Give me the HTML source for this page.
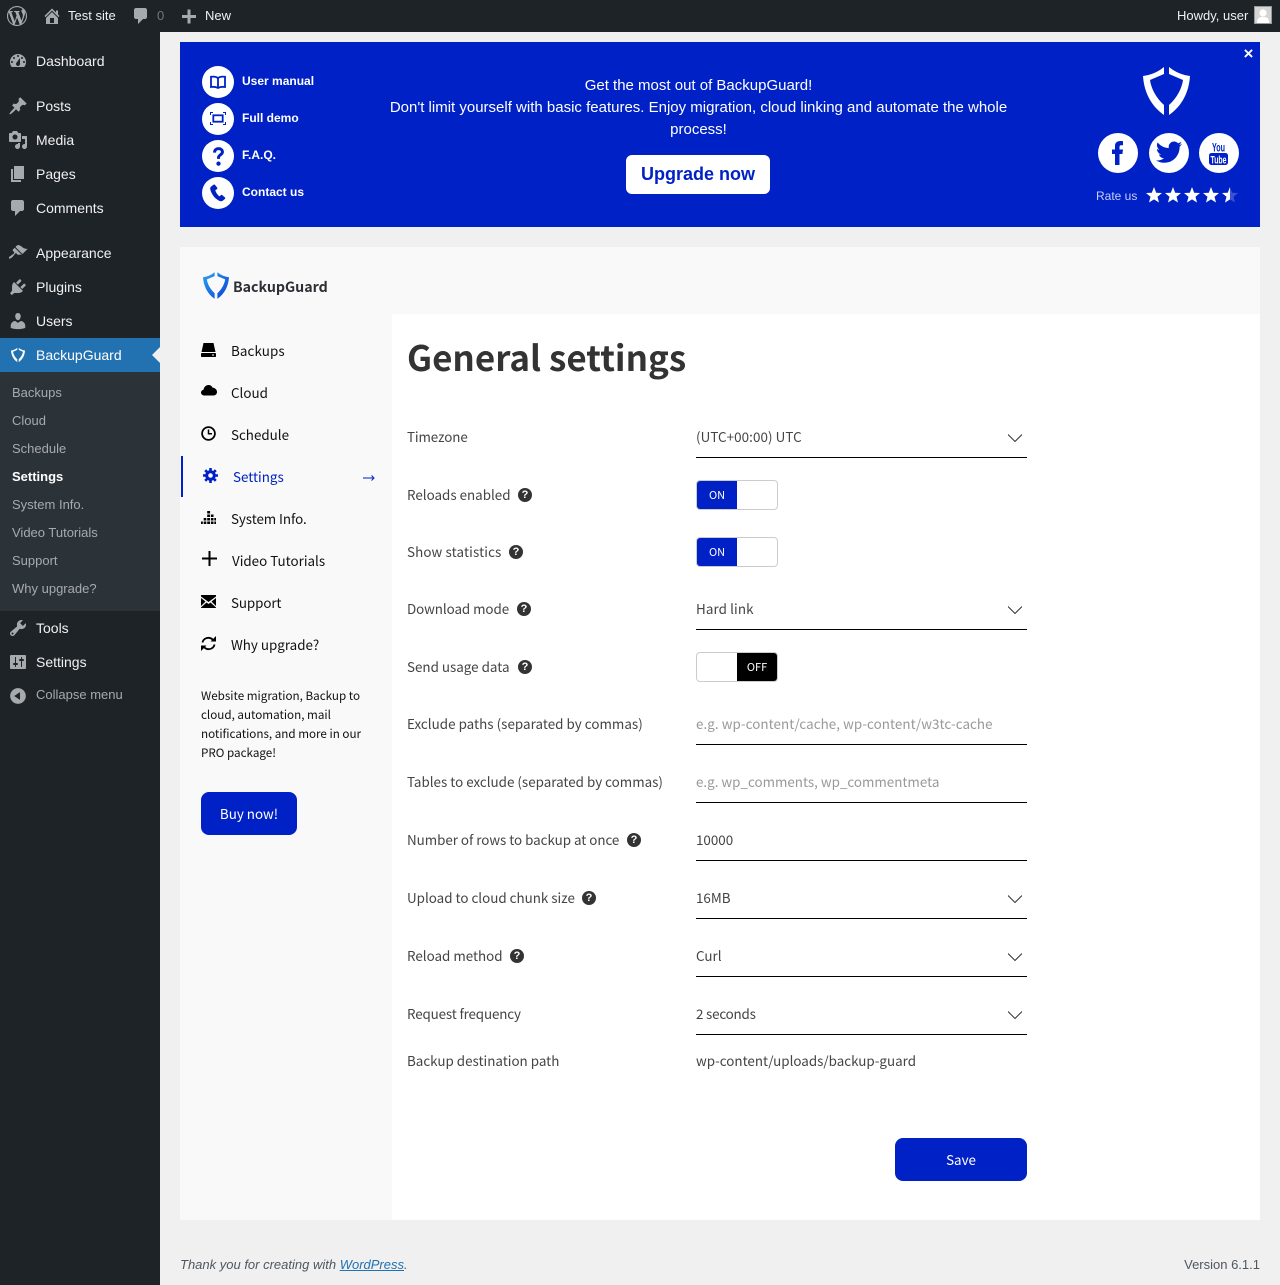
<!DOCTYPE html>
<html lang="en"><head><meta charset="utf-8"><title>General settings</title>
<style>
*{box-sizing:border-box}
html,body{margin:0;padding:0}
body{width:1280px;height:1285px;position:relative;overflow:hidden;background:#f0f0f1;font-family:"Liberation Sans",sans-serif}
.a{position:absolute;white-space:nowrap}
svg{position:absolute;display:block}
.ab{font-size:13px;line-height:20px;color:#f0f0f1}
.m{font-size:14px;line-height:20px;color:#f0f0f1;left:36px}
.s{font-size:13px;line-height:18px;color:#a7aaad;left:12px}
.ic{fill:#a7aaad}
.n{font-family:"Noto Sans CJK JP",sans-serif;font-size:13.4px;line-height:20px;color:#111;margin-top:-1px}
.l{font-family:"Noto Sans CJK JP",sans-serif;font-size:13.4px;line-height:20px;color:#444;left:407px;margin-top:-1px}
.v{font-family:"Noto Sans CJK JP",sans-serif;font-size:13.4px;line-height:20px;color:#444;left:696px;margin-top:-1px}
.p{color:#999}
.u{position:absolute;left:696px;width:331px;height:1px;background:#000}
.q{position:absolute;width:14px;height:14px;border-radius:50%;background:#333;color:#fff;font:bold 11px/14px "Liberation Sans",sans-serif;text-align:center}
.t{position:absolute;left:696px;width:82px;height:30px;border:1px solid #ccc;border-radius:4px;background:#fff;overflow:hidden}
.t b{position:absolute;top:0;height:28px;width:40px;font:400 11px/28px "Noto Sans CJK JP",sans-serif;color:#fff;text-align:center}
.ch{position:absolute;left:1008px;width:14px;height:8px}
.bl{font-size:12px;font-weight:bold;line-height:16px;color:#fff;left:242px}
.c{position:absolute;background:#fff;border-radius:50%}
</style></head><body>

<!-- admin bar -->
<div class="a" style="left:0;top:0;width:1280px;height:32px;background:#1d2327"></div>
<svg style="left:7px;top:6px" width="20" height="20" viewBox="0 0 20 20"><path class="ic" fill-rule="evenodd" d="M20 10c0-5.51-4.49-10-10-10C4.48 0 0 4.49 0 10c0 5.52 4.48 10 10 10 5.51 0 10-4.48 10-10zM7.78 15.37L4.37 6.22c.55-.02 1.17-.08 1.17-.08.5-.06.44-1.13-.06-1.11 0 0-1.45.11-2.37.11-.18 0-.37 0-.58-.01C4.12 2.69 6.87 1.11 10 1.11c2.33 0 4.45.87 6.05 2.34-.68-.11-1.65.39-1.65 1.58 0 .74.45 1.36.9 2.1.35.61.55 1.36.55 2.46 0 1.49-1.4 5-1.4 5l-3.03-8.37c.54-.02.82-.17.82-.17.5-.05.44-1.25-.06-1.22 0 0-1.44.12-2.38.12-.87 0-2.33-.12-2.33-.12-.5-.03-.56 1.2-.06 1.22l.92.08 1.26 3.41zM17.41 10c.24-.64.74-1.87.43-4.25.7 1.29 1.05 2.71 1.05 4.25 0 3.29-1.73 6.24-4.4 7.78.97-2.59 1.94-5.2 2.92-7.78zM6.1 18.09C3.12 16.65 1.11 13.53 1.11 10c0-1.3.23-2.48.72-3.59C3.25 10.3 4.67 14.2 6.1 18.09zm4.03-6.63l2.58 6.98c-.86.29-1.76.45-2.71.45-.79 0-1.57-.11-2.29-.33.81-2.38 1.62-4.74 2.42-7.1z"/></svg>
<svg style="left:42px;top:6px" width="20" height="20" viewBox="0 0 20 20"><path class="ic" d="M16 8.5l1.53 1.53-1.06 1.06L10 4.62l-6.47 6.47-1.06-1.06L10 2.5l4 4v-2h2v4zm-6-2.46l6 5.99V18H4v-5.97zM12 17v-5H8v5h4z"/></svg>
<div class="a ab" style="left:68px;top:6px">Test site</div>
<svg style="left:131px;top:6px" width="20" height="20" viewBox="0 0 20 20"><path class="ic" d="M5 2h9c1.1 0 2 .9 2 2v7c0 1.1-.9 2-2 2h-2l-5 5v-5H5c-1.1 0-2-.9-2-2V4c0-1.1.9-2 2-2z"/></svg>
<div class="a ab" style="left:157px;top:6px;color:#72777c">0</div>
<svg style="left:179px;top:6px" width="20" height="20" viewBox="0 0 20 20"><path class="ic" d="M17 9v3h-5.500v5.500h-3V12H3V9h5.500V3.500h3V9z"/></svg>
<div class="a ab" style="left:205px;top:6px">New</div>
<div class="a ab" style="left:1177px;top:6px">Howdy, user</div>
<div class="a" style="left:1254px;top:6px;width:18px;height:18px;background:#d5d5d5;border:1px solid #999;overflow:hidden">
<svg style="left:0;top:0" width="16" height="16" viewBox="0 0 16 16"><circle cx="8" cy="6" r="3.600" fill="#fff"/><path d="M2 16c0-5 2-6 6-6s6 1 6 6z" fill="#fff"/></svg></div>

<!-- sidebar -->
<div class="a" style="left:0;top:32px;width:160px;height:1253px;background:#1d2327"></div>
<svg style="left:8px;top:51px" width="20" height="20" viewBox="0 0 20 20"><path class="ic" fill-rule="evenodd" d="M3.760 16h12.480c1.100-1.370 1.760-3.110 1.760-5 0-4.420-3.580-8-8-8s-8 3.580-8 8c0 1.890.660 3.630 1.760 5zM10 4c.55 0 1 .45 1 1s-.45 1-1 1-1-.45-1-1 .45-1 1-1zM6 6c.55 0 1 .45 1 1s-.45 1-1 1-1-.45-1-1 .45-1 1-1zm8 0c.55 0 1 .45 1 1s-.45 1-1 1-1-.45-1-1 .45-1 1-1zm-5.370 5.550L12 7v6c0 1.100-.9 2-2 2s-2-.9-2-2c0-.57.24-1.080.63-1.450zM4 10c.55 0 1 .45 1 1s-.45 1-1 1-1-.45-1-1 .45-1 1-1zm12 0c.55 0 1 .45 1 1s-.45 1-1 1-1-.45-1-1 .45-1 1-1z"/></svg>
<div class="a m" style="top:51px">Dashboard</div>
<svg style="left:8px;top:96px" width="20" height="20" viewBox="0 0 20 20"><path class="ic" d="M10.440 3.020l1.820-1.820 6.360 6.350-1.830 1.820c-1.050-.68-2.480-.57-3.410.36l-.75.75c-.92.93-1.040 2.350-.35 3.410l-1.830 1.820-2.410-2.410-2.800 2.790c-.42.42-3.380 2.710-3.800 2.290s1.860-3.390 2.280-3.810l2.790-2.790L4.100 9.360l1.830-1.820c1.050.69 2.480.57 3.400-.36l.75-.75c.93-.92 1.050-2.350.36-3.410z"/></svg>
<div class="a m" style="top:96px">Posts</div>
<svg style="left:8px;top:130px" width="20" height="20" viewBox="0 0 20 20"><path class="ic" fill-rule="evenodd" d="M13 11V4c0-.55-.45-1-1-1h-1.670L9 1H5L3.670 3H2c-.55 0-1 .45-1 1v7c0 .55.45 1 1 1h10c.55 0 1-.45 1-1zM7 4.500c1.380 0 2.500 1.120 2.500 2.500S8.380 9.500 7 9.500 4.500 8.380 4.500 7 5.620 4.500 7 4.500zM14 6h5v10.500c0 1.380-1.120 2.500-2.500 2.500S14 17.880 14 16.500s1.120-2.500 2.500-2.500c.17 0 .34.02.5.05V9h-3V6zm-4 8.050V13h2v3.500c0 1.380-1.120 2.500-2.500 2.500S7 17.880 7 16.500 8.120 14 9.500 14c.17 0 .34.02.5.05z"/></svg>
<div class="a m" style="top:130px">Media</div>
<svg style="left:8px;top:164px" width="20" height="20" viewBox="0 0 20 20"><path class="ic" d="M6 15V2h10v13H6zm-1 1h8v2H3V5h2v11z"/></svg>
<div class="a m" style="top:164px">Pages</div>
<svg style="left:8px;top:198px" width="20" height="20" viewBox="0 0 20 20"><path class="ic" d="M5 2h9c1.100 0 2 .9 2 2v7c0 1.100-.9 2-2 2h-2l-5 5v-5H5c-1.100 0-2-.9-2-2V4c0-1.100.9-2 2-2z"/></svg>
<div class="a m" style="top:198px">Comments</div>
<svg style="left:8px;top:243px" width="20" height="20" viewBox="0 0 20 20"><path class="ic" d="M14.480 11.060L7.410 3.990l1.500-1.500c.5-.56 2.300-.47 3.510.32 1.210.8 1.430 1.280 2.910 2.100 1.180.64 2.450 1.260 4.450.85zm-.71.71L6.700 4.700 4.930 6.470c-.39.39-.39 1.020 0 1.410l1.060 1.060c.39.39.39 1.030 0 1.420-.6.6-1.430 1.110-2.210 1.690-.35.26-.7.53-1.010.84C1.430 13.230.4 14.800 1.070 15.470c.67.67 2.240-.35 3.580-1.690.31-.31.58-.66.84-1.010.58-.78 1.090-1.610 1.690-2.210.39-.39 1.020-.39 1.410 0l1.060 1.060c.39.39 1.020.39 1.410 0z"/></svg>
<div class="a m" style="top:243px">Appearance</div>
<svg style="left:8px;top:277px" width="20" height="20" viewBox="0 0 20 20"><path class="ic" d="M13.110 4.360L9.870 7.600 8 5.730l3.240-3.240c.35-.34 1.050-.2 1.560.32.52.51.66 1.210.31 1.550zm-8 1.770l.91-1.120 9.010 9.010-1.190.84c-.71.71-2.630 1.160-3.820 1.160H6.140L4.900 17.260c-.59.59-1.540.59-2.120 0-.59-.58-.59-1.530 0-2.120l1.240-1.240v-3.880c0-1.130.4-3.190 1.090-3.890zm7.260 3.970l3.240-3.240c.34-.35 1.040-.21 1.550.31.52.51.66 1.210.31 1.550l-3.240 3.250z"/></svg>
<div class="a m" style="top:277px">Plugins</div>
<svg style="left:8px;top:311px" width="20" height="20" viewBox="0 0 20 20"><path class="ic" d="M10 9.250c-2.270 0-2.730-3.440-2.730-3.440C7 4.020 7.820 2 9.970 2c2.160 0 2.980 2.020 2.710 3.810 0 0-.41 3.440-2.680 3.440zm0 2.570L12.720 10c2.390 0 4.520 2.330 4.520 4.530v2.490s-3.650 1.130-7.240 1.130c-3.650 0-7.240-1.130-7.240-1.130v-2.490c0-2.250 1.940-4.480 4.470-4.480z"/></svg>
<div class="a m" style="top:311px">Users</div>
<div class="a" style="left:0;top:338px;width:160px;height:34px;background:#2271b1"></div>
<svg style="left:11px;top:347px" width="14" height="16" viewBox="0 0 47 48"><path fill="#fff" d="M21 0V7L7 13C8 21 13 31 21 38V48C8 39 1 25 0 9C8 8 15 5 21 0ZM26 0V7L40 13C39 21 34 31 26 38V48C39 39 46 25 47 9C39 8 32 5 26 0Z"/></svg>
<div class="a m" style="top:345px;color:#fff">BackupGuard</div>
<div class="a" style="left:152px;top:347px;width:0;height:0;border:8px solid transparent;border-left:0;border-right-color:#f0f0f1"></div>
<div class="a" style="left:0;top:372px;width:160px;height:239px;background:#2c3338"></div>
<div class="a s" style="top:384px">Backups</div>
<div class="a s" style="top:412px">Cloud</div>
<div class="a s" style="top:440px">Schedule</div>
<div class="a s" style="top:468px;color:#fff;font-weight:bold">Settings</div>
<div class="a s" style="top:496px">System Info.</div>
<div class="a s" style="top:524px">Video Tutorials</div>
<div class="a s" style="top:552px">Support</div>
<div class="a s" style="top:580px">Why upgrade?</div>
<svg style="left:8px;top:618px" width="20" height="20" viewBox="0 0 20 20"><path class="ic" fill-rule="evenodd" d="M16.680 9.770c-1.340 1.340-3.300 1.670-4.950.99l-5.410 6.520c-.99.99-2.590.99-3.580 0s-.99-2.590 0-3.570l6.520-5.420c-.68-1.650-.35-3.610.99-4.950 1.280-1.280 3.120-1.620 4.720-1.060l-2.890 2.890 2.820 2.820 2.860-2.870c.53 1.580.18 3.390-1.080 4.650zM3.810 16.210c.4.39 1.040.39 1.430 0 .4-.4.4-1.040 0-1.430-.39-.4-1.030-.4-1.430 0-.39.39-.39 1.030 0 1.430z"/></svg>
<div class="a m" style="top:618px">Tools</div>
<svg style="left:8px;top:652px" width="20" height="20" viewBox="0 0 20 20"><path class="ic" fill-rule="evenodd" d="M18 16V4c0-.55-.45-1-1-1H3c-.55 0-1 .45-1 1v12c0 .55.45 1 1 1h14c.55 0 1-.45 1-1zM8 11h1c.55 0 1 .45 1 1s-.45 1-1 1H8v1.500c0 .28-.22.5-.5.5s-.5-.22-.5-.5V13H6c-.55 0-1-.45-1-1s.45-1 1-1h1V5.500c0-.28.22-.5.5-.5s.5.22.5.5V11zm5-2h-1c-.55 0-1-.45-1-1s.45-1 1-1h1V5.500c0-.28.22-.5.5-.5s.5.22.5.5V7h1c.55 0 1 .45 1 1s-.45 1-1 1h-1v5.500c0 .28-.22.5-.5.5s-.5-.22-.5-.5V9z"/></svg>
<div class="a m" style="top:652px">Settings</div>
<svg style="left:8px;top:686px" width="20" height="20" viewBox="0 0 20 20"><path class="ic" fill-rule="evenodd" d="M10 2.160c4.330 0 7.840 3.510 7.840 7.840s-3.510 7.840-7.840 7.840S2.160 14.330 2.160 10 5.710 2.160 10 2.160zm2 11.720V6.120L6.180 9.970z"/></svg>
<div class="a" style="left:36px;top:685px;font-size:13px;line-height:20px;color:#a7aaad">Collapse menu</div>

<!-- banner -->
<div class="a" style="left:180px;top:42px;width:1080px;height:185px;background:#0021c6"></div>
<div class="c" style="left:202px;top:66px;width:32px;height:32px"></div>
<div class="c" style="left:202px;top:103px;width:32px;height:32px"></div>
<div class="c" style="left:202px;top:140px;width:32px;height:32px"></div>
<div class="c" style="left:202px;top:177px;width:32px;height:32px"></div>
<svg style="left:210px;top:75px" width="16" height="14" viewBox="0 0 16 14"><path fill="none" stroke="#0021c6" stroke-width="1.800" d="M8 3C6 1.600 3.500 1.400 1 1.800V12c2.500-.4 5-.2 7 1 2-1.200 4.500-1.400 7-1V1.800C12.500 1.400 10 1.600 8 3V13"/></svg>
<svg style="left:210px;top:112px" width="16" height="13" viewBox="0 0 16 13"><path fill="none" stroke="#0021c6" d="M.5 3V.5H3M13 .5h2.500V3M.5 10v2.500H3M13 12.500h2.500V10"/><rect x="3.300" y="3.300" width="9.400" height="6.400" fill="none" stroke="#0021c6" stroke-width="1.800"/></svg>
<svg style="left:212.500px;top:147px" width="11" height="19" viewBox="0 0 14 24"><path fill="none" stroke="#0021c6" stroke-width="3.800" d="M2 7C2 3.500 4.200 2 7 2s5 1.500 5 4.200c0 3.600-5 3.800-5 7.300V15"/><circle cx="7" cy="21" r="2.700" fill="#0021c6"/></svg>
<svg style="left:210px;top:184px" width="16" height="18" viewBox="0 0 16 18"><path fill="#0021c6" d="M3.500.8 1 2.600C.2 3.300 0 4.300.3 5.400c1 4.500 4.400 9.300 9.100 11.500 1.100.5 2.300.6 3.300-.1l2.300-1.900c.4-.4.4-1 0-1.400l-2.700-2.400c-.4-.3-1-.3-1.400 0l-1.500 1.300C7.600 11 5.800 8.500 5.300 6.300L7 5.100c.4-.3.5-.9.300-1.300L5.100 1C4.700.5 4 .4 3.500.8z"/></svg>
<div class="a bl" style="top:73px">User manual</div>
<div class="a bl" style="top:110px">Full demo</div>
<div class="a bl" style="top:147px">F.A.Q.</div>
<div class="a bl" style="top:184px">Contact us</div>

<div class="a" style="left:380.500px;top:75px;width:636px;text-align:center;white-space:normal;color:#fff;font-size:15px;line-height:22px">Get the most out of BackupGuard!<br>Don't limit yourself with basic features. Enjoy migration, cloud linking and automate the whole<br>process!</div>
<div class="a" style="left:626px;top:155px;width:144px;height:39px;background:#fff;border-radius:6px;text-align:center;font-size:18px;font-weight:bold;line-height:38px;color:#0021c6">Upgrade now</div>

<div class="a" style="left:1243.500px;top:44px;font-size:17px;font-weight:bold;line-height:20px;color:#fff">×</div>
<svg style="left:1143px;top:67px" width="47" height="48" viewBox="0 0 47 48"><path fill="#fff" d="M21 0V7L7 13C8 21 13 31 21 38V48C8 39 1 25 0 9C8 8 15 5 21 0ZM26 0V7L40 13C39 21 34 31 26 38V48C39 39 46 25 47 9C39 8 32 5 26 0Z"/></svg>
<div class="c" style="left:1098px;top:133px;width:40px;height:40px"></div>
<div class="c" style="left:1149px;top:133px;width:40px;height:40px"></div>
<div class="c" style="left:1199px;top:133px;width:40px;height:40px"></div>
<svg style="left:1098px;top:133px" width="40" height="40" viewBox="0 0 40 40"><path fill="#0021c6" d="M17 32V21h-3v-4.500H17v-3.500C17 9.800 19 8 22.500 8c1.200 0 2 .1 2.500.2v4h-1.700c-1.500 0-1.800.8-1.800 2v2.300H25l-.6 4.500H21.500v11z"/></svg>
<svg style="left:1149px;top:133px" width="40" height="40" viewBox="0 0 40 40"><path fill="#0021c6" d="M33 11c-1 .5-2 .8-3 .9 1.100-.7 2-1.700 2.400-3-1 .6-2.200 1.100-3.400 1.300-1-1-2.400-1.700-3.900-1.700-3 0-5.400 2.400-5.400 5.400 0 .4 0 .8.100 1.200C15.300 14.900 11.300 12.800 8.700 9.500c-.5.800-.7 1.700-.7 2.700 0 1.900 1 3.500 2.400 4.500-.9 0-1.700-.3-2.400-.7v.1c0 2.600 1.900 4.800 4.300 5.300-.8.200-1.600.2-2.400.1.700 2.100 2.700 3.700 5 3.700-1.800 1.400-4.200 2.300-6.700 2.300-.4 0-.9 0-1.300-.1 2.400 1.500 5.200 2.400 8.300 2.400 9.900 0 15.400-8.200 15.400-15.400v-.7C31.300 13 32.300 12 33 11z"/></svg>
<svg style="left:1199px;top:133px" width="40" height="40" viewBox="0 0 40 40"><rect x="10" y="20" width="19" height="12" rx="2.500" fill="#0021c6"/><text x="19.500" y="18.500" text-anchor="middle" font-family="Liberation Sans,sans-serif" font-size="12" font-weight="bold" fill="#0021c6" textLength="13" lengthAdjust="spacingAndGlyphs">You</text><text x="19.500" y="30.500" text-anchor="middle" font-family="Liberation Sans,sans-serif" font-size="11" font-weight="bold" fill="#fff" textLength="16" lengthAdjust="spacingAndGlyphs">Tube</text></svg>
<div class="a" style="left:1096px;top:187px;font-size:12px;line-height:18px;color:#c6cff5">Rate us</div>
<svg style="left:1146px;top:187px" width="94" height="17" viewBox="0 0 94 17"><defs><path id="st" d="M8 0l2.200 5.700 5.800.3-4.500 3.700 1.500 5.800L8 12.400 3 15.500l1.500-5.800L0 6l5.800-.3z"/></defs><use href="#st" fill="#fff"/><use href="#st" x="19" fill="#fff"/><use href="#st" x="38" fill="#fff"/><use href="#st" x="57" fill="#fff"/><use href="#st" x="76" fill="#3a52d6"/><path d="M84 0l-2.200 5.700-5.800.3 4.500 3.700-1.500 5.800 5-3.100z" fill="#fff"/></svg>

<!-- main panel -->
<div class="a" style="left:180px;top:247px;width:1080px;height:973px;background:#f9f9f9"></div>
<div class="a" style="left:392px;top:314px;width:868px;height:906px;background:#fff"></div>

<svg style="left:203px;top:272px" width="26" height="27" viewBox="0 0 47 48"><defs><linearGradient id="g" x1="0" y1="0" x2="1" y2="1"><stop offset="0" stop-color="#2aa5ee"/><stop offset="1" stop-color="#0b3fd8"/></linearGradient></defs><path fill="url(#g)" d="M21 0V7L7 13C8 21 13 31 21 38V48C8 39 1 25 0 9C8 8 15 5 21 0ZM26 0V7L40 13C39 21 34 31 26 38V48C39 39 46 25 47 9C39 8 32 5 26 0Z"/></svg>
<div class="a" style="left:233px;top:275px;font:bold 14.2px/24px 'Noto Sans CJK JP',sans-serif;color:#2c2f33">BackupGuard</div>

<svg style="left:201px;top:343px" width="15" height="14" viewBox="0 0 15 14"><path d="M2.500 0h10L14.500 9H.5z"/><rect y="10" width="15" height="4" rx=".8"/><rect x="11" y="11.500" width="2" height="1" fill="#fff"/></svg>
<div class="a n" style="left:231px;top:341px;letter-spacing:.1px">Backups</div>
<svg style="left:201px;top:385px" width="16" height="11" viewBox="0 0 16 11"><path d="M3.500 10.500C1.500 10.500 0 9.300 0 7.500 0 6 1 5 2.500 4.700 3 2 5 0 7.500 0c2 0 3.400 1 4 2.600C14 2.800 16 4.500 16 7c0 2-1.500 3.500-3.500 3.500z"/></svg>
<div class="a n" style="left:231px;top:383px">Cloud</div>
<svg style="left:201px;top:426px" width="15" height="15" viewBox="0 0 15 15"><circle cx="7.500" cy="7.500" r="6.400" fill="none" stroke="#000" stroke-width="1.800"/><path d="M7.500 3.500v4.300H11" fill="none" stroke="#000" stroke-width="1.500"/></svg>
<div class="a n" style="left:231px;top:425px">Schedule</div>
<div class="a" style="left:181px;top:456px;width:2px;height:41px;background:#0021c6"></div>
<svg style="left:203px;top:468px" width="15" height="15" viewBox="0 0 15 15"><circle cx="7.500" cy="7.500" r="3.800" fill="none" stroke="#0021c6" stroke-width="3"/><path fill="none" stroke="#0021c6" stroke-width="2.600" d="M7.500 0v3M7.500 12v3M0 7.500h3M12 7.500h3M2.200 2.200l2.100 2.100M10.700 10.700l2.100 2.100M2.200 12.800l2.100-2.100M10.700 4.300l2.100-2.100"/></svg>
<div class="a n" style="left:233px;top:467px;color:#0021c6">Settings</div>
<svg style="left:363px;top:474px" width="12" height="8" viewBox="0 0 12 8"><path fill="none" stroke="#0021c6" d="M0 4h11M8.500 1.500 11 4 8.500 6.500"/></svg>
<svg style="left:201px;top:511px" width="15" height="14" viewBox="0 0 15 14"><path d="M6.200 0h2.900v2.500H6.200zM6.200 3.500h2.900V6H6.200zM6.200 7h2.900v2.500H6.200zM6.200 10.500h2.900V13H6.200zM10 7h2.500v2.500H10zM10 10.500h2.500V13H10zM10 3.500h2.500V6H10zM2.700 7h2.600v2.500H2.700zM2.700 10.500h2.600V13H2.700zM0 10.500h1.800V13H0zM13.300 10.500H15V13h-1.700zM13.300 7H15v2.500h-1.700z"/></svg>
<div class="a n" style="left:231px;top:509px;letter-spacing:-.08px">System Info.</div>
<svg style="left:202px;top:551px" width="15" height="15" viewBox="0 0 15 15"><path d="M6.500 0h2v6.500H15v2H8.500V15h-2V8.500H0v-2h6.500z"/></svg>
<div class="a n" style="left:232px;top:551px">Video Tutorials</div>
<svg style="left:201px;top:595px" width="15" height="13" viewBox="0 0 15 13"><path d="M0 0h15v1.500L7.500 7 0 1.500zM0 3l4.500 3.500L0 11zM15 3l-4.500 3.500L15 11zM5.500 7.500l2 1.500 2-1.500L15 12.500V13H0v-.5z"/></svg>
<div class="a n" style="left:231px;top:593px;letter-spacing:-.1px">Support</div>
<svg style="left:201px;top:636px" width="15" height="15" viewBox="0 0 15 15"><path fill="none" stroke="#000" stroke-width="1.800" d="M1.500 6.500C2 3.700 4.500 1.800 7.500 1.800c1.800 0 3.300.8 4.500 2.200M13.500 8.500c-.5 2.800-3 4.700-6 4.700-1.800 0-3.300-.8-4.500-2.200"/><path d="M15 0v5.500H9.500zM0 15V9.500h5.500z"/></svg>
<div class="a n" style="left:231px;top:635px">Why upgrade?</div>

<div class="a" style="left:201px;top:686px;font:11.65px/19px 'Noto Sans CJK JP',sans-serif;color:#111">Website migration, Backup to<br>cloud, automation, mail<br>notifications, and more in our<br>PRO package!</div>
<div class="a" style="left:201px;top:792px;width:96px;height:43px;background:#0021c6;border-radius:8px;text-align:center;font:13.4px/42px 'Noto Sans CJK JP',sans-serif;color:#fff">Buy now!</div>

<!-- form -->
<div class="a" style="left:407px;top:331px;font:bold 35px/52px 'Noto Sans CJK JP',sans-serif;color:#333">General settings</div>

<div class="a l" style="top:427px;letter-spacing:-.1px">Timezone</div>
<div class="a v" style="top:427px;letter-spacing:.07px">(UTC+00:00) UTC</div>
<div class="u" style="top:457px"></div>
<svg class="ch" style="top:434px" viewBox="0 0 14 8"><path d="M0 .5l7 7 7-7" fill="none" stroke="#333"/></svg>

<div class="a l" style="top:485px">Reloads enabled</div>
<div class="q" style="left:518px;top:488px">?</div>
<div class="t" style="top:480px"><b style="left:0;background:#0021c6">ON</b></div>

<div class="a l" style="top:542px;letter-spacing:.13px">Show statistics</div>
<div class="q" style="left:509px;top:545px">?</div>
<div class="t" style="top:537px"><b style="left:0;background:#0021c6">ON</b></div>

<div class="a l" style="top:599px;letter-spacing:-.07px">Download mode</div>
<div class="q" style="left:517px;top:602px">?</div>
<div class="a v" style="top:599px;letter-spacing:.1px">Hard link</div>
<div class="u" style="top:629px"></div>
<svg class="ch" style="top:606px" viewBox="0 0 14 8"><path d="M0 .5l7 7 7-7" fill="none" stroke="#333"/></svg>

<div class="a l" style="top:657px">Send usage data</div>
<div class="q" style="left:518px;top:660px">?</div>
<div class="t" style="top:652px"><b style="right:0;background:#000">OFF</b></div>

<div class="a l" style="top:714px;letter-spacing:.03px">Exclude paths (separated by commas)</div>
<div class="a v p" style="top:714px;letter-spacing:.06px">e.g. wp-content/cache, wp-content/w3tc-cache</div>
<div class="u" style="top:744px"></div>

<div class="a l" style="top:772px">Tables to exclude (separated by commas)</div>
<div class="a v p" style="top:772px">e.g. wp_comments, wp_commentmeta</div>
<div class="u" style="top:802px"></div>

<div class="a l" style="top:830px;letter-spacing:-.03px">Number of rows to backup at once</div>
<div class="q" style="left:627px;top:833px">?</div>
<div class="a v" style="top:830px">10000</div>
<div class="u" style="top:860px"></div>

<div class="a l" style="top:888px">Upload to cloud chunk size</div>
<div class="q" style="left:582px;top:891px">?</div>
<div class="a v" style="top:888px">16MB</div>
<div class="u" style="top:918px"></div>
<svg class="ch" style="top:895px" viewBox="0 0 14 8"><path d="M0 .5l7 7 7-7" fill="none" stroke="#333"/></svg>

<div class="a l" style="top:946px">Reload method</div>
<div class="q" style="left:510px;top:949px">?</div>
<div class="a v" style="top:946px">Curl</div>
<div class="u" style="top:976px"></div>
<svg class="ch" style="top:953px" viewBox="0 0 14 8"><path d="M0 .5l7 7 7-7" fill="none" stroke="#333"/></svg>

<div class="a l" style="top:1004px;letter-spacing:-.15px">Request frequency</div>
<div class="a v" style="top:1004px;letter-spacing:-.2px">2 seconds</div>
<div class="u" style="top:1034px"></div>
<svg class="ch" style="top:1011px" viewBox="0 0 14 8"><path d="M0 .5l7 7 7-7" fill="none" stroke="#333"/></svg>

<div class="a l" style="top:1051px">Backup destination path</div>
<div class="a v" style="top:1051px">wp-content/uploads/backup-guard</div>

<div class="a" style="left:895px;top:1138px;width:132px;height:43px;background:#0021c6;border-radius:8px;text-align:center;font:13.4px/42px 'Noto Sans CJK JP',sans-serif;color:#fff">Save</div>

<!-- footer -->
<div class="a" style="left:180px;top:1256px;font-size:13px;line-height:18px;font-style:italic;color:#50575e">Thank you for creating with <span style="color:#2271b1;text-decoration:underline">WordPress</span>.</div>
<div class="a" style="right:20px;top:1256px;font-size:13px;line-height:18px;color:#50575e">Version 6.1.1</div>
</body></html>
